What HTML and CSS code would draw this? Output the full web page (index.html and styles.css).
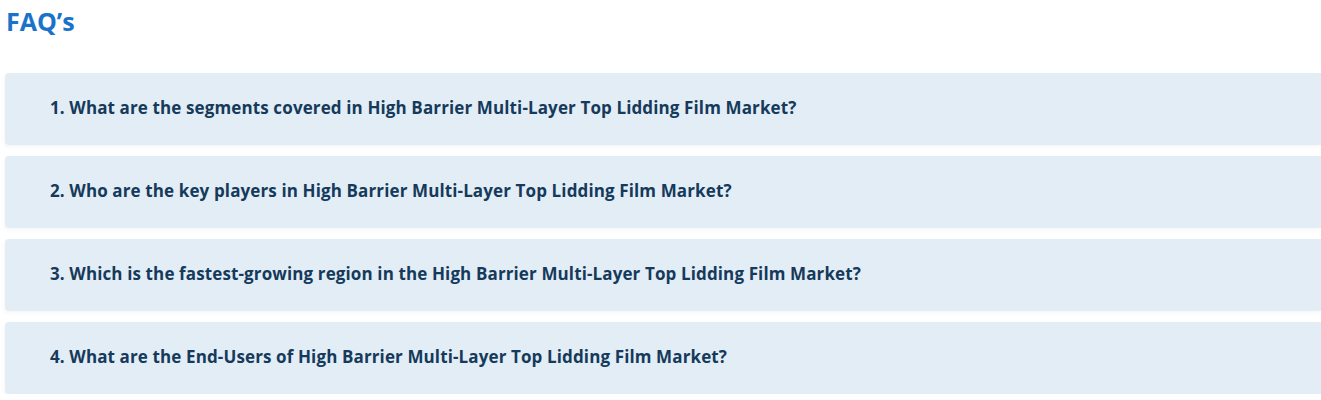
FILE: index.html
```html
<!DOCTYPE html>
<html lang="en">
<head>
    <meta charset="UTF-8">
    <meta name="viewport" content="width=device-width, initial-scale=1.0">
    <title>FAQ's</title>
    <link rel="stylesheet" href="styles.css">
</head>
<body>
    <div class="faq">
        <h2 class="faq-title">FAQ’s</h2>

        <div class="faq-list">
            <div class="faq-item">
                <h3>1. What are the segments covered in High Barrier Multi-Layer Top Lidding Film Market?</h3>
            </div>
            <div class="faq-item">
                <h3>2. Who are the key players in High Barrier Multi-Layer Top Lidding Film Market?</h3>
            </div>
            <div class="faq-item">
                <h3>3. Which is the fastest-growing region in the High Barrier Multi-Layer Top Lidding Film Market?</h3>
            </div>
            <div class="faq-item">
                <h3>4. What are the End-Users of High Barrier Multi-Layer Top Lidding Film Market?</h3>
            </div>
        </div>
    </div>
</body>
</html>
```

FILE: styles.css
```css
body {
    margin: 0;
    font-family: "Open Sans", Lato, Arial, sans-serif;
    background: #fff;
    overflow: hidden;
}
.faq {
    padding: 4px 0 0 5px;
}
.faq-title {
    margin: 0 0 0 1px;
    font-size: 25px;
    font-weight: 700;
    color: #1a73c9;
    line-height: 34px;
}
.faq-list {
    display: flex;
    flex-direction: column;
    gap: 11px;
    margin-top: 35px;
}
.faq-item {
    background: #e3edf6;
    border-radius: 4px 0 0 4px;
    height: 72px;
    display: flex;
    align-items: center;
    padding-left: 45px;
    padding-bottom: 4px;
    box-sizing: border-box;
    box-shadow: -1px 2px 4px rgba(0, 0, 0, 0.04);
}
.faq-item h3 {
    margin: 0;
    font-size: 17px;
    font-weight: 700;
    letter-spacing: 0.12px;
    color: #153a5b;
}
```
